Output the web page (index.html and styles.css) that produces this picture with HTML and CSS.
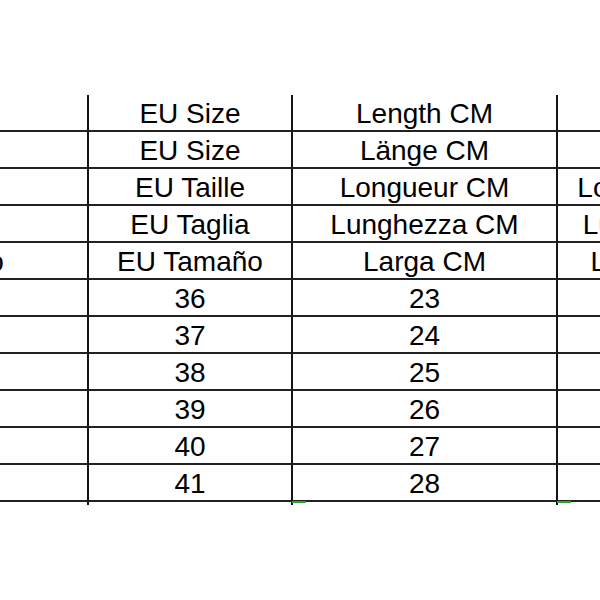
FILE: index.html
```html
<!DOCTYPE html>
<html>
<head>
<meta charset="utf-8">
<link rel="stylesheet" href="styles.css">
</head>
<body>
<div class="page">
  <div class="sheet">
    <div class="cell">US Size</div><div class="cell">EU Size</div><div class="cell">Length CM</div><div class="cell">Length in inches</div>
    <div class="cell">US Größe</div><div class="cell">EU Size</div><div class="cell">Länge CM</div><div class="cell">Länge in Zoll</div>
    <div class="cell">US Taille</div><div class="cell">EU Taille</div><div class="cell">Longueur CM</div><div class="cell">Longueur en pouces</div>
    <div class="cell">US Taglia</div><div class="cell">EU Taglia</div><div class="cell">Lunghezza CM</div><div class="cell">Lunghezza in pollici</div>
    <div class="cell">US Tamaño</div><div class="cell">EU Tamaño</div><div class="cell">Larga CM</div><div class="cell">Longitud pulgadas</div>
    <div class="cell">5</div><div class="cell">36</div><div class="cell">23</div><div class="cell">9.06</div>
    <div class="cell">6</div><div class="cell">37</div><div class="cell">24</div><div class="cell">9.45</div>
    <div class="cell">7</div><div class="cell">38</div><div class="cell">25</div><div class="cell">9.84</div>
    <div class="cell">8</div><div class="cell">39</div><div class="cell">26</div><div class="cell">10.24</div>
    <div class="cell">9</div><div class="cell">40</div><div class="cell">27</div><div class="cell">10.63</div>
    <div class="cell">10</div><div class="cell">41</div><div class="cell">28</div><div class="cell">11.02</div>
    <div class="tail"></div><div class="tail"></div><div class="tail mark"></div><div class="tail mark"></div>
  </div>
</div>
</body>
</html>
```

FILE: styles.css
```css
html, body {
  margin: 0;
  padding: 0;
  background: #ffffff;
  overflow: hidden;
}

.page {
  width: 600px;
  height: 600px;
  overflow: hidden;
  padding-top: 95px;
  box-sizing: border-box;
}

.sheet {
  display: grid;
  grid-template-columns: 314px 204px 265px 296px;
  grid-auto-rows: 37px;
  margin-left: -225px;
  width: 1079px;
  font-family: "Liberation Sans", Arial, sans-serif;
  font-size: 28px;
  color: #000000;
}

.cell {
  display: flex;
  align-items: center;
  justify-content: center;
  white-space: nowrap;
  border-right: 2px solid #151515;
  border-bottom: 2px solid #222222;
  line-height: 1;
  padding-top: 2px;
  box-sizing: border-box;
}

.tail {
  height: 3px;
  border-right: 2px solid #151515;
  position: relative;
}

.sheet .tail {
  align-self: start;
}

.mark::before {
  content: "";
  position: absolute;
  left: -1px;
  top: -1px;
  width: 14px;
  height: 2px;
  background: #2aa82a;
}
```
